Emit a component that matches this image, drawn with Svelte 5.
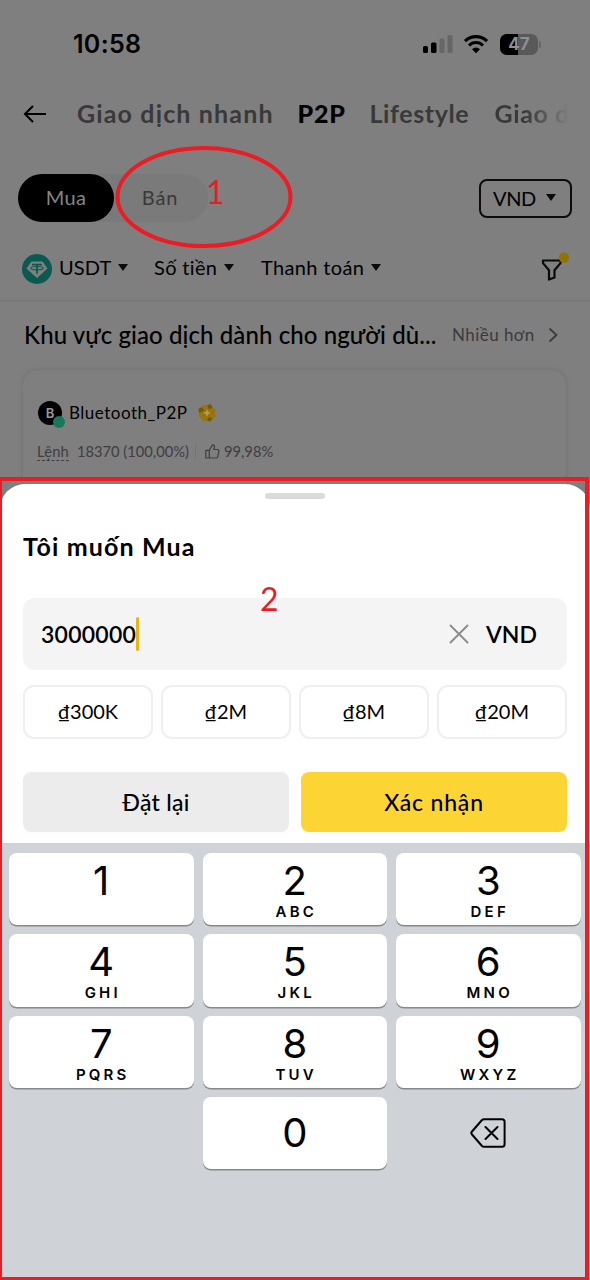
<script>
  const quickAmounts = ['₫300K', '₫2M', '₫8M', '₫20M'];

  const keys = [
    { digit: '1', letters: '' },
    { digit: '2', letters: 'ABC' },
    { digit: '3', letters: 'DEF' },
    { digit: '4', letters: 'GHI' },
    { digit: '5', letters: 'JKL' },
    { digit: '6', letters: 'MNO' },
    { digit: '7', letters: 'PQRS' },
    { digit: '8', letters: 'TUV' },
    { digit: '9', letters: 'WXYZ' }
  ];

  let amount = $state('3000000');

  function press(digit) {
    amount += digit;
  }

  function erase() {
    amount = amount.slice(0, -1);
  }
</script>

<div class="screen">
  <div class="page">
    <div class="status">
      <span class="time">10:58</span>
      <svg class="signal" width="30" height="20" viewBox="0 0 30 20">
        <rect x="0" y="12" width="5" height="7" rx="1.5" fill="#000" />
        <rect x="8" y="8.5" width="5.5" height="10.5" rx="1.5" fill="#000" />
        <rect x="16.5" y="4.5" width="5" height="14.5" rx="1.5" fill="#666" />
        <rect x="24.5" y="1" width="5" height="18" rx="1.5" fill="#666" />
      </svg>
      <svg class="wifi" width="26" height="20" viewBox="0 0 26 20">
        <path d="M2 7.200a15.600 15.600 0 0 1 22 0" fill="none" stroke="#000" stroke-width="3.2" />
        <path d="M6 11.500a9.900 9.900 0 0 1 14 0" fill="none" stroke="#000" stroke-width="3" />
        <path d="M13 19.200L9 15.200a5.700 5.700 0 0 1 8 0z" fill="#000" />
      </svg>
      <div class="battery"><span>47</span></div>
    </div>

    <nav class="tabs">
      <svg class="back" width="24" height="20" viewBox="0 0 24 20" fill="none" stroke="#000" stroke-width="2.1">
        <path d="M23 10H2M10 2L2 10l8 8" />
      </svg>
      <span class="tab t1">Giao dịch nhanh</span>
      <span class="tab t2 active">P2P</span>
      <span class="tab t3">Lifestyle</span>
      <span class="tab t4">Giao d</span>
    </nav>

    <div class="mode">
      <div class="switch">
        <span class="buy">Mua</span>
        <span class="sell">Bán</span>
      </div>
      <div class="currency">VND <i class="caret"></i></div>
    </div>

    <div class="filters">
      <svg class="coin" width="30" height="30" viewBox="0 0 30 30">
        <circle cx="15" cy="15" r="15" fill="#0b5a51" />
        <path d="M9.500 7.500h11l5 7L15 24 4.500 14.500z" fill="#808080" />
        <path d="M10 10.700h10M15 10.700v9" stroke="#0b5a51" stroke-width="1.8" />
        <ellipse cx="15" cy="14.2" rx="6.2" ry="1.7" fill="none" stroke="#0b5a51" stroke-width="1.1" />
      </svg>
      <span class="filter f1">USDT <i class="caret"></i></span>
      <span class="filter f2">Số tiền <i class="caret"></i></span>
      <span class="filter f3">Thanh toán <i class="caret"></i></span>
      <svg class="funnel" width="29" height="30" viewBox="0 0 29 30">
        <path d="M3 8.500h17.500v2.600l-6 7.200v7.200l-5.500 2v-9.200l-6-7.200z" fill="none" stroke="#0a0a0a" stroke-width="2.2" stroke-linejoin="round" />
        <circle cx="24" cy="5.5" r="5.2" fill="#927209" />
      </svg>
    </div>

    <div class="section">
      <span class="section-title">Khu vực giao dịch dành cho người dù...</span>
      <span class="more">Nhiều hơn</span>
      <svg width="10" height="16" viewBox="0 0 10 16" fill="none" stroke="#3b3b3b" stroke-width="1.8">
        <path d="M1.500 1.500L8.500 8l-7 6.500" />
      </svg>
    </div>

    <div class="card">
      <div class="merchant">
        <div class="avatar">B<i></i></div>
        <span class="name">Bluetooth_P2P</span>
        <svg width="20" height="20" viewBox="0 0 20 20">
          <path d="M7 1.500l3 .7 3.500-.9 2.200 3.200 3 2.200-.8 3.300.9 3.700-3.300 1.800-2.300 3-3.200-.9-3.700.9-2-3.200-3-2.500.9-3.100L1.300 6l3.400-1.700z" fill="#99740c" />
          <path d="M10 2.200l3.500-.9 2.200 3.200-3.700 1.700zM2.200 9.700L1.300 6l3.400-1.700L7.200 7.500zM15.500 15.500l-2.300 3-3.200-.9 2-3.600z" fill="#775609" />
          <path d="M10 6.200l1.200 2.600 2.600 1.200-2.600 1.200L10 13.800l-1.200-2.600L6.200 10l2.600-1.200z" fill="#b39c63" />
        </svg>
      </div>
      <div class="stats">
        <span class="orders">Lệnh</span>
        <span class="count">18370 (100,00%)</span>
        <i class="divider"></i>
        <svg width="15" height="15" viewBox="0 0 15 15" fill="none" stroke="#3e3e3e" stroke-width="1.2" stroke-linejoin="round">
          <path d="M4.300 6.300L7.500.8c1.600 0 2.200 1 1.900 2.200L8.800 5.500h3.700c1 0 1.600.8 1.400 1.700l-1.100 5.400c-.2.900-.7 1.400-1.600 1.400H4.300zM4.300 6.300H.8V14h3.500" />
        </svg>
        <span class="rate">99,98%</span>
      </div>
    </div>
  </div>

  <div class="sheet">
    <div class="grabber"></div>
    <h2>Tôi muốn Mua</h2>

    <div class="field">
      <span class="amount">{amount}</span>
      <i class="cursor"></i>
      <svg class="clear" width="20" height="20" viewBox="0 0 20 20" stroke="#8c8c8c" stroke-width="1.9" stroke-linecap="round">
        <path d="M1.500 1.500l17 17M18.500 1.500l-17 17" />
      </svg>
      <span class="unit">VND</span>
    </div>

    <div class="chips">
      {#each quickAmounts as chip}
        <span class="chip">{chip}</span>
      {/each}
    </div>

    <div class="actions">
      <button class="reset">Đặt lại</button>
      <button class="confirm">Xác nhận</button>
    </div>
  </div>

  <div class="keypad">
    {#each keys as key}
      <button class="key" onclick={() => press(key.digit)}>
        <span class="digit">{key.digit}</span>
        {#if key.letters}
          <span class="letters">{key.letters}</span>
        {/if}
      </button>
    {/each}
    <span></span>
    <button class="key zero" onclick={() => press('0')}>
      <span class="digit">0</span>
    </button>
    <button class="erase" onclick={erase} aria-label="Xóa">
      <svg width="36" height="32" viewBox="0 0 36 32" fill="none" stroke="#000" stroke-width="2" stroke-linejoin="round" stroke-linecap="round">
        <path d="M14 2.200h18q2.600 0 2.600 2.600v22.400q0 2.600-2.600 2.600H14q-1.200 0-2-.8L2 17.500q-1.400-1.500 0-3L12 3q.8-.8 2-.8zM15.500 10l12 12M27.500 10l-12 12" />
      </svg>
    </button>
  </div>

  <!-- step markers -->
  <svg class="ring" width="180" height="104" viewBox="0 0 180 104">
    <ellipse cx="90" cy="52" rx="86.5" ry="49" fill="none" stroke="#ed1c24" stroke-width="4" />
  </svg>
  <span class="mark one">1</span>
  <div class="frame"></div>
  <span class="mark two">2</span>
</div>

<style>
  :global(body) { background: #7f7f7f; }

  .screen {
    position: relative;
    display: flex;
    flex-direction: column;
    width: 590px;
    height: 1280px;
    overflow: hidden;
    background: #7f7f7f;
    font-family: Lato, 'Noto Sans', sans-serif;
    color: #000;
    white-space: nowrap;
  }
  svg { display: block; flex-shrink: 0; }
  button {
    border: none;
    padding: 0;
    font: inherit;
    color: inherit;
  }

  .page { height: 484px; overflow: hidden; }

  /* Status bar */
  .status {
    display: flex;
    align-items: center;
    height: 88px;
    padding-left: 73px;
  }
  .time {
    width: 350px;
    font: 600 25px Inter, sans-serif;
    letter-spacing: 0.3px;
  }
  .wifi { margin-left: 10px; }
  .battery {
    position: relative;
    width: 38px;
    height: 21px;
    margin-left: 11px;
    border-radius: 6.5px;
    background: linear-gradient(90deg, #000 18px, #595959 18px);
    color: #909090;
    font: 700 17px/21px Inter, sans-serif;
    text-align: center;
  }
  .battery::after {
    content: '';
    position: absolute;
    right: -3px;
    top: 7px;
    width: 2px;
    height: 7px;
    border-radius: 0 2px 2px 0;
    background: #666;
  }

  /* Tabs */
  .tabs {
    display: flex;
    align-items: center;
    height: 52px;
    padding-left: 23px;
    font-size: 25px;
    font-weight: 700;
    color: #393939;
  }
  .tab { flex-shrink: 0; margin-top: -2px; }
  .t1 {
    width: 220.5px;
    margin-left: 30px;
    letter-spacing: 1.15px;
  }
  .t2 { width: 72px; }
  .t3 { width: 125px; letter-spacing: 0.6px; }
  .t4 {
    width: 76px;
    letter-spacing: 0.6px;
    background: linear-gradient(90deg, #393939 30px, #7f7f7f 74px);
    background-clip: text;
    color: transparent;
  }
  .active {
    color: #000;
    font-weight: 900;
    letter-spacing: 0.8px;
  }

  /* Buy / sell */
  .mode {
    display: flex;
    align-items: center;
    justify-content: space-between;
    height: 116px;
    padding: 0 18px;
    font-size: 20px;
  }
  .switch {
    display: flex;
    height: 48px;
    width: 190px;
    border-radius: 24px;
    background: #7a7a7a;
    line-height: 47px;
    text-align: center;
  }
  .buy {
    width: 96px;
    border-radius: 24px;
    background: #000;
    color: #858585;
    letter-spacing: 0.3px;
  }
  .sell {
    width: 92px;
    color: #393939;
    letter-spacing: 0.8px;
  }
  .currency {
    display: flex;
    align-items: center;
    justify-content: space-between;
    box-sizing: border-box;
    width: 93px;
    height: 39px;
    padding: 0 14px 1px 12px;
    border: 2px solid #0c0c0c;
    border-radius: 8px;
    letter-spacing: -0.4px;
  }
  .caret {
    display: inline-block;
    border: 5.5px solid transparent;
    border-top: 7px solid #0a0a0a;
    border-bottom: 0;
  }

  /* Filters */
  .filters {
    display: flex;
    align-items: center;
    box-sizing: border-box;
    height: 45px;
    margin-top: -10px;
    padding-left: 22px;
    font-size: 20px;
  }
  .filter {
    display: flex;
    align-items: center;
    gap: 7px;
    margin-top: -3px;
    letter-spacing: 0.35px;
  }
  .f1 {
    width: 95px;
    margin-left: 7px;
    letter-spacing: 0.1px;
  }
  .f2 { width: 107px; }
  .f3 { width: 279px; }
  .funnel { margin-top: -4px; }

  /* Section */
  .section {
    display: flex;
    align-items: center;
    box-sizing: border-box;
    height: 70px;
    margin-top: 9px;
    padding: 0 0 3px 24px;
    border-top: 2px solid #797979;
  }
  .section-title {
    width: 428px;
    font-size: 24px;
    font-weight: 500;
    letter-spacing: 0.1px;
  }
  .more {
    width: 96px;
    font-size: 17px;
    letter-spacing: 0.45px;
    color: #3b3b3b;
  }

  .card {
    width: 543px;
    height: 130px;
    margin-left: 23px;
    border-radius: 15px;
    box-shadow: 0 0 5px #707070;
    background: #7f7f7f;
  }
  .merchant {
    display: flex;
    align-items: center;
    height: 86px;
    padding-left: 15px;
  }
  .avatar {
    position: relative;
    width: 24px;
    height: 24px;
    border-radius: 50%;
    background: #000;
    color: #999;
    font: 600 13px/24px Inter, sans-serif;
    text-align: center;
  }
  .avatar i {
    position: absolute;
    right: -3px;
    bottom: -3px;
    width: 12px;
    height: 12px;
    border-radius: 50%;
    background: #17795a;
  }
  .name {
    width: 128px;
    margin: -2px 0 0 7px;
    font-size: 17px;
    letter-spacing: 0.5px;
  }
  .stats {
    display: flex;
    align-items: center;
    height: 20px;
    margin-top: -15px;
    padding-left: 14px;
    font-size: 14.7px;
    color: #3e3e3e;
  }
  .orders {
    width: 32px;
    border-bottom: 1px dashed #3e3e3e;
    letter-spacing: 0.2px;
  }
  .count { width: 118px; margin-left: 8px; }
  .divider {
    width: 1px;
    height: 14px;
    margin-right: 9px;
    background: #747474;
  }
  .rate { margin-left: 4px; }

  /* Bottom sheet */
  .sheet {
    box-sizing: border-box;
    flex-shrink: 0;
    height: 359px;
    padding: 9px 23px 0;
    border-radius: 25px 25px 0 0;
    background: #fff;
  }
  .grabber {
    width: 60px;
    height: 6px;
    margin: 0 auto;
    border-radius: 3px;
    background: #dadada;
  }
  h2 {
    margin: 30px 0 0;
    font-size: 25px;
    line-height: 34px;
    font-weight: 700;
    letter-spacing: 1.15px;
  }
  .field {
    display: flex;
    align-items: center;
    height: 72px;
    margin-top: 35px;
    padding: 0 31px 0 18px;
    border-radius: 12px;
    background: #f4f4f4;
    font-size: 23px;
    font-weight: 600;
  }
  .amount { letter-spacing: 0.25px; }
  .cursor {
    width: 3px;
    height: 34px;
    border-radius: 2px;
    background: #e8b614;
  }
  .clear { margin-left: auto; }
  .unit { width: 50px; margin-left: 17px; }
  .chips {
    display: grid;
    grid-template-columns: repeat(4, 1fr);
    gap: 8px;
    margin-top: 15px;
  }
  .chip {
    box-sizing: border-box;
    height: 54px;
    border: 2px solid #efefef;
    border-radius: 11px;
    font-size: 20px;
    line-height: 49px;
    text-align: center;
  }
  .actions {
    display: flex;
    gap: 12px;
    margin-top: 33px;
  }
  .actions button {
    flex: 1;
    height: 60px;
    border-radius: 8px;
    font-size: 23px;
    font-weight: 500;
    letter-spacing: 0.3px;
  }
  .reset { background: #ececec; }
  .actions .confirm { background: #fcd535; letter-spacing: 0.8px; }

  /* Keypad */
  .keypad {
    display: grid;
    grid-template-columns: repeat(3, 184.5px);
    grid-auto-rows: 72.3px;
    gap: 9px;
    align-content: start;
    flex: 1;
    padding: 10px 9px;
    background: #cfd3d8;
    font-family: Inter, sans-serif;
  }
  .key {
    display: flex;
    flex-direction: column;
    align-items: center;
    padding-top: 5px;
    border-radius: 8px;
    background: #fff;
    box-shadow: 0 1.5px 0 #88898d;
  }
  .digit {
    font-size: 40px;
    line-height: 46px;
    font-weight: 400;
  }
  .letters {
    font-size: 15px;
    line-height: 15px;
    font-weight: 600;
    letter-spacing: 3.2px;
    margin-right: -3px;
  }
  .zero {
    justify-content: center;
    padding: 0;
  }
  .erase {
    display: flex;
    align-items: center;
    justify-content: center;
    background: none;
  }

  /* Markers over the screen */
  .ring {
    position: absolute;
    left: 114px;
    top: 145px;
  }
  .mark {
    position: absolute;
    color: #ed1c24;
    font: 32px/36px Lato, sans-serif;
  }
  .one { left: 206px; top: 174px; }
  .two { left: 260px; top: 581px; }
  .frame {
    position: absolute;
    box-sizing: border-box;
    left: 0;
    top: 477px;
    width: 589px;
    height: 803px;
    border: 4px solid #ed1c24;
    border-left-width: 2px;
    border-bottom-width: 3px;
  }
</style>
